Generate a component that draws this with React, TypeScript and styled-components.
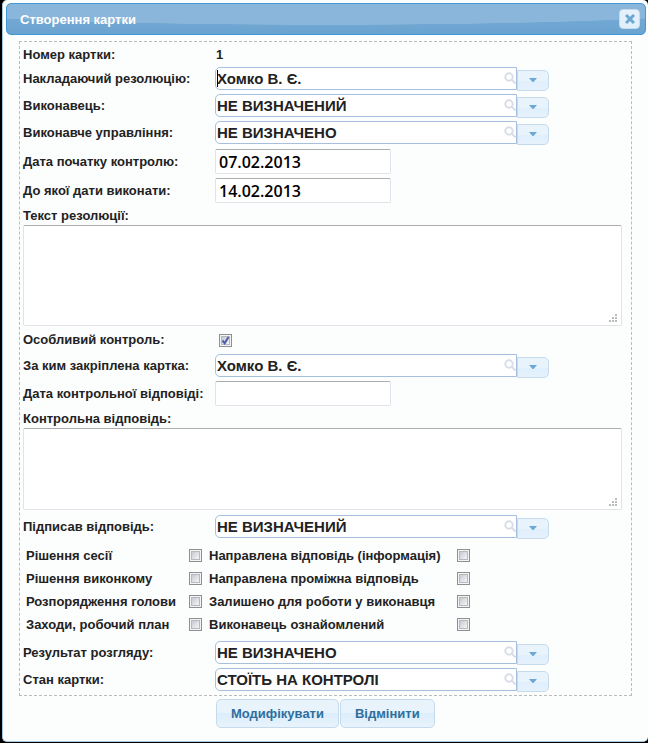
import React, { useId } from "react";
import styled, { createGlobalStyle } from "styled-components";

const GlobalStyle = createGlobalStyle`
  * { box-sizing: border-box; }
  body {
    margin: 0;
    background: #000;
    color: #222;
    font: bold 13px/18px "Liberation Sans", Arial, sans-serif;
  }
`;

const Dialog = styled.main`
  margin-left: 2px;
  padding: 3px 2px 13px 3px;
  background: #fcfdfd;
  border: solid #a6c9e2;
  border-width: 0 0 1px 1px;
  border-radius: 5px;
`;

const TitleBar = styled.header`
  display: flex;
  align-items: center;
  justify-content: space-between;
  height: 32px;
  padding: 0 5px 0 13px;
  border: 1px solid #4297d7;
  border-radius: 5px;
  background:
    radial-gradient(ellipse 71% 21px at 50% 0, #89b6da 98%, transparent 100%),
    linear-gradient(#79add6, #6ba3d0);
`;

const Title = styled.h1`
  margin: 0;
  padding-top: 2px;
  color: #fff;
  font-size: 13px;
  line-height: 18px;
`;

const CloseButton = styled.button`
  display: grid;
  place-items: center;
  width: 21px;
  height: 20px;
  padding: 0;
  border: 1px solid #c5dbec;
  border-radius: 4px;
  background: linear-gradient(#e6f1fb, #dfeffc);
`;

const Fieldset = styled.fieldset`
  min-width: 0;
  margin: 6px 14px 0 13px;
  padding: 3px 9px 1px 3px;
  border: 1px dashed #bbb;
`;

const Row = styled.div<{ $h?: number; $top?: number }>`
  display: grid;
  grid-template-columns: 192px 1fr;
  align-items: center;
  height: ${(p) => p.$h ?? 27}px;
  padding-top: ${(p) => p.$top ?? 0}px;
`;

const FieldLabel = styled.label`
  white-space: nowrap;
`;

const BlockLabel = styled.label`
  display: block;
  height: 20px;
  line-height: 22px;
`;

const Output = styled.output`
  padding-left: 1px;
`;

const ComboBox = styled.div`
  display: flex;
  height: 24px;
`;

const ComboField = styled.div`
  position: relative;
  width: 302px;
  height: 23px;
`;

const ComboInput = styled.input`
  display: block;
  width: 100%;
  height: 100%;
  padding: 0 18px 0 1px;
  border: 1px solid #a6bfde;
  border-radius: 5px 0 0 5px;
  outline: 0;
  background: #fff;
  color: #222;
  caret-color: transparent;
  font: bold 15px/20px "Liberation Sans", Arial, sans-serif;
`;

const Caret = styled.span`
  position: absolute;
  left: 2px;
  top: 3px;
  width: 1px;
  height: 17px;
  background: #000;
`;

const SearchIcon = styled.svg`
  position: absolute;
  right: 1px;
  top: 5px;
`;

const ComboToggle = styled.button`
  display: grid;
  place-items: center;
  align-self: flex-end;
  width: 32px;
  height: 21px;
  padding: 0;
  border: 1px solid #c5dbec;
  border-radius: 0 5px 5px 0;
  background: linear-gradient(#e8f3fc 50%, #dfeffc 52%, #e6f2fc);
`;

const DateInput = styled.input`
  width: 176px;
  height: 25px;
  padding: 0 3px;
  border: 1px solid #e2e3ea;
  border-top-color: #abadb3;
  border-radius: 2px;
  background: #fff;
  color: #000;
  font: 600 16px/21px "Open Sans", "Noto Sans", sans-serif;
`;

const AreaBox = styled.div`
  position: relative;
`;

const Area = styled.textarea<{ $h: number }>`
  display: block;
  width: 100%;
  height: ${(p) => p.$h}px;
  resize: none;
  border: 1px solid #e2e3ea;
  border-top-color: #abadb3;
  border-radius: 2px;
  background: #fff;
  font: bold 15px/18px "Liberation Sans", Arial, sans-serif;
`;

const Grip = styled.svg`
  position: absolute;
  right: 5px;
  bottom: 4px;
`;

const CheckWrap = styled.span`
  position: relative;
  display: block;
  width: 13px;
  height: 13px;
`;

const CheckInput = styled.input`
  appearance: none;
  display: block;
  width: 13px;
  height: 13px;
  margin: 0;
  border: 1px solid #8e8f8f;
  background: linear-gradient(135deg, #c6cad2, #f4f5f6) center / 7px 7px no-repeat, #f4f4f4;
  box-shadow: inset 0 0 0 1px #f4f4f4, inset 0 0 0 2px #b5bac1;

  & + svg { display: none; }
  &:checked + svg { display: block; }
`;

const Tick = styled.svg`
  position: absolute;
  left: 2px;
  top: 2px;
  pointer-events: none;
`;

const CheckSlot = styled.div`
  padding-left: 4px;
`;

const CheckGrid = styled.div`
  display: grid;
  grid-template-columns: 163px 20px 248px 13px;
  grid-auto-rows: 23px;
  align-items: center;
  margin: 4px 0 3px;
  padding-left: 3px;
`;

const Dates = styled.div`
  padding-top: 1px;
`;

const Section = styled.div`
  padding: 3px 0 1px;
`;

const Actions = styled.footer`
  display: flex;
  gap: 1px;
  padding: 3px 0 0 210px;
`;

const ActionButton = styled.button`
  height: 29px;
  padding: 0 14px;
  border: 1px solid #c5dbec;
  border-radius: 5px;
  background: linear-gradient(#e8f3fc 48%, #dcedfb 50%, #e8f3fc);
  color: #2e6e9e;
  font: bold 13px/18px "Liberation Sans", Arial, sans-serif;
`;

function Combo({ label, value, focused }: { label: string; value: string; focused?: boolean }) {
  const id = useId();
  return (
    <Row>
      <FieldLabel htmlFor={id}>{label}</FieldLabel>
      <ComboBox>
        <ComboField>
          <ComboInput id={id} type="text" defaultValue={value} />
          {focused && <Caret />}
          <SearchIcon width="12" height="12" viewBox="0 0 12 12" fill="none" stroke="#d8dde8" strokeWidth="2">
            <circle cx="5" cy="5" r="3.7" />
            <path d="M7.8 7.8 11.5 11.5" />
          </SearchIcon>
        </ComboField>
        <ComboToggle type="button" aria-label={label}>
          <svg width="8" height="4" viewBox="0 0 8 4" fill="#6da8d5">
            <path d="M0 0h8L4.5 4h-1z" />
          </svg>
        </ComboToggle>
      </ComboBox>
    </Row>
  );
}

function DateField({ label, value }: { label: string; value: string }) {
  const id = useId();
  return (
    <Row $h={29}>
      <FieldLabel htmlFor={id}>{label}</FieldLabel>
      <DateInput id={id} type="text" defaultValue={value} />
    </Row>
  );
}

const gripDots = [[6, 0], [3, 3], [6, 3], [0, 6], [3, 6], [6, 6]];

function TextField({ label, height }: { label: string; height: number }) {
  const id = useId();
  return (
    <>
      <BlockLabel htmlFor={id}>{label}</BlockLabel>
      <AreaBox>
        <Area id={id} $h={height} />
        <Grip width="8" height="8" viewBox="0 0 8 8" fill="#bbb">
          {gripDots.map(([x, y]) => (
            <rect key={`${x}-${y}`} x={x} y={y} width="2" height="2" />
          ))}
        </Grip>
      </AreaBox>
    </>
  );
}

function Check({ id, checked }: { id: string; checked?: boolean }) {
  return (
    <CheckWrap>
      <CheckInput id={id} type="checkbox" defaultChecked={checked} />
      <Tick width="9" height="9" viewBox="0 0 9 9" fill="none" stroke="#4b5fa3" strokeWidth="2">
        <path d="M1.5 4.5 3.7 7.2 7.5 1" />
      </Tick>
    </CheckWrap>
  );
}

const flags = [
  "Рішення сесії",
  "Направлена відповідь (інформація)",
  "Рішення виконкому",
  "Направлена проміжна відповідь",
  "Розпорядження голови",
  "Залишено для роботи у виконавця",
  "Заходи, робочий план",
  "Виконавець ознайомлений",
];

export default function App() {
  return (
    <>
      <GlobalStyle />
      <Dialog>
        <TitleBar>
          <Title>Створення картки</Title>
          <CloseButton type="button" aria-label="Закрити">
            <svg width="10" height="10" viewBox="0 0 10 10" stroke="#6da8d5" strokeWidth="3">
              <path d="M1 1 9 9M9 1 1 9" />
            </svg>
          </CloseButton>
        </TitleBar>
        <form onSubmit={(e) => e.preventDefault()}>
          <Fieldset>
            <Row $h={20}>
              <FieldLabel htmlFor="number">Номер картки:</FieldLabel>
              <Output id="number">1</Output>
            </Row>
            <Combo label="Накладаючий резолюцію:" value="Хомко В. Є." focused />
            <Combo label="Виконавець:" value="НЕ ВИЗНАЧЕНИЙ" />
            <Combo label="Виконавче управління:" value="НЕ ВИЗНАЧЕНО" />
            <Dates>
              <DateField label="Дата початку контролю:" value="07.02.2013" />
              <DateField label="До якої дати виконати:" value="14.02.2013" />
            </Dates>
            <TextField label="Текст резолюції:" height={101} />
            <Row $h={26} $top={2}>
              <FieldLabel htmlFor="special">Особливий контроль:</FieldLabel>
              <CheckSlot>
                <Check id="special" checked />
              </CheckSlot>
            </Row>
            <Combo label="За ким закріплена картка:" value="Хомко В. Є." />
            <DateField label="Дата контрольної відповіді:" value="" />
            <TextField label="Контрольна відповідь:" height={82} />
            <Section>
              <Combo label="Підписав відповідь:" value="НЕ ВИЗНАЧЕНИЙ" />
              <CheckGrid>
                {flags.map((text, i) => (
                  <React.Fragment key={text}>
                    <FieldLabel htmlFor={`flag-${i}`}>{text}</FieldLabel>
                    <Check id={`flag-${i}`} />
                  </React.Fragment>
                ))}
              </CheckGrid>
              <Combo label="Результат розгляду:" value="НЕ ВИЗНАЧЕНО" />
              <Combo label="Стан картки:" value="СТОЇТЬ НА КОНТРОЛІ" />
            </Section>
          </Fieldset>
          <Actions>
            <ActionButton type="submit">Модифікувати</ActionButton>
            <ActionButton type="button">Відмінити</ActionButton>
          </Actions>
        </form>
      </Dialog>
    </>
  );
}
